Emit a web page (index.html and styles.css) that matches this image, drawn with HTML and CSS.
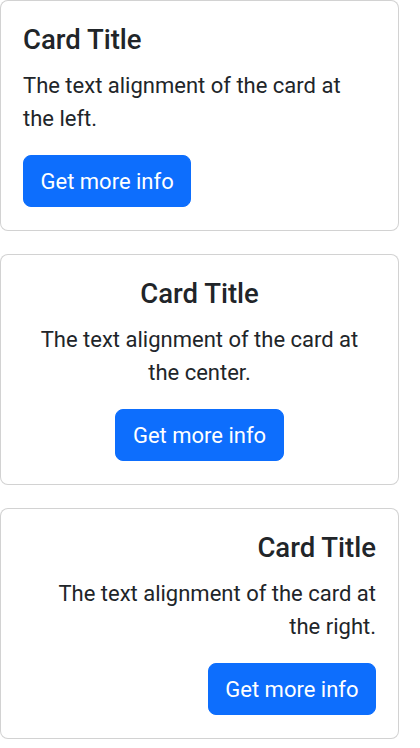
FILE: index.html
```html
<!DOCTYPE html>
<html lang="en">
<head>
    <meta charset="UTF-8">
    <meta name="viewport" content="width=device-width, initial-scale=1.0">
    <title>Card Alignment</title>
    <link rel="stylesheet" href="styles.css">
</head>
<body>

<div class="container">
    <div class="card text-start">
        <div class="card-body">
            <h5 class="card-title">Card Title</h5>
            <p class="card-text">The text alignment of the card at the left.</p>
            <a href="#" class="btn">Get more info</a>
        </div>
    </div>

    <div class="card text-center">
        <div class="card-body">
            <h5 class="card-title">Card Title</h5>
            <p class="card-text">The text alignment of the card at the center.</p>
            <a href="#" class="btn">Get more info</a>
        </div>
    </div>

    <div class="card text-end">
        <div class="card-body">
            <h5 class="card-title">Card Title</h5>
            <p class="card-text">The text alignment of the card at the right.</p>
            <a href="#" class="btn">Get more info</a>
        </div>
    </div>
</div>

</body>
</html>
```
FILE: styles.css
```css
body {
    font-family: Roboto, "Noto Sans", sans-serif;
    font-size: 22px;
    line-height: 1.5;
    color: #212529;
    background-color: #fff;
    margin: 0;
}
.container {
    width: 399px;
    display: flex;
    flex-direction: column;
    gap: 23px;
}
.card {
    border: 1px solid rgba(0, 0, 0, 0.175);
    border-radius: 8px;
    background-color: #fff;
}
.card-body {
    padding: 22px 22px 23px;
}
.card-title {
    font-size: 27.5px;
    font-weight: 500;
    line-height: 1.2;
    margin: 0 0 13px;
}
.card-text {
    margin: 0 0 20px;
}
.text-start { text-align: left; }
.text-center { text-align: center; }
.text-end { text-align: right; }
.btn {
    display: inline-block;
    padding: 8.5px 16.5px;
    font-size: 22px;
    line-height: 1.5;
    color: #fff;
    background-color: #0d6efd;
    border: 1px solid #0d6efd;
    border-radius: 8px;
    text-decoration: none;
    vertical-align: middle;
}
```
